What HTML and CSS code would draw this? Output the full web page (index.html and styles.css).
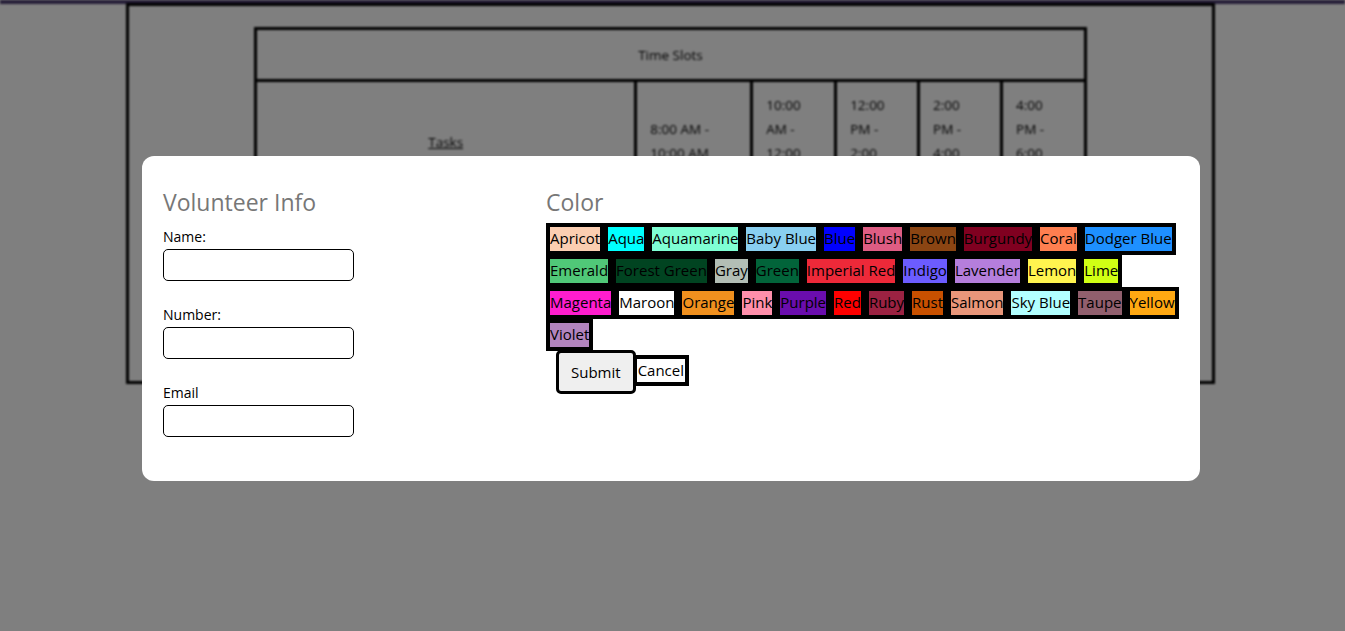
FILE: index.html
```html
<!DOCTYPE html>
<html lang="en">
<head>
<meta charset="utf-8">
<title>Volunteer Sign-up</title>
<link rel="stylesheet" href="styles.css">
</head>
<body>
<div class="page">
  <div class="topbar"></div>
  <div class="frame">
    <table class="slots">
      <tr><th colspan="6" class="head">Time Slots</th></tr>
      <tr>
        <td class="tasks"><span class="tasks-label">Tasks</span></td>
        <td class="time w116">8:00 AM -<br>10:00 AM</td>
        <td class="time w84">10:00<br>AM -<br>12:00<br>PM</td>
        <td class="time w83">12:00<br>PM -<br>2:00<br>PM</td>
        <td class="time w83">2:00<br>PM -<br>4:00<br>PM</td>
        <td class="time w84">4:00<br>PM -<br>6:00<br>PM</td>
      </tr>
    </table>
  </div>
</div>

<div class="overlay">
  <div class="modal">
    <section class="info">
      <h2 class="title">Volunteer Info</h2>
      <div class="field first">
        <label for="name">Name:</label>
        <input id="name" type="text">
      </div>
      <div class="field">
        <label for="number">Number:</label>
        <input id="number" type="text">
      </div>
      <div class="field last">
        <label for="email">Email</label>
        <input id="email" type="text">
      </div>
    </section>
    <section class="colors">
      <h2 class="title">Color</h2>
      <div class="swatches">
        <span class="cell"><span class="chip" style="background:#FBCEB1">Apricot</span></span>
        <span class="cell"><span class="chip" style="background:#00FFFF">Aqua</span></span>
        <span class="cell"><span class="chip" style="background:#7FFFD4">Aquamarine</span></span>
        <span class="cell"><span class="chip" style="background:#89CFF0">Baby Blue</span></span>
        <span class="cell"><span class="chip" style="background:#0000FF">Blue</span></span>
        <span class="cell"><span class="chip" style="background:#DE5D83">Blush</span></span>
        <span class="cell"><span class="chip" style="background:#8B4513">Brown</span></span>
        <span class="cell"><span class="chip" style="background:#800020">Burgundy</span></span>
        <span class="cell"><span class="chip" style="background:#FF7F50">Coral</span></span>
        <span class="cell"><span class="chip" style="background:#1E90FF">Dodger Blue</span></span>
        <span class="cell"><span class="chip" style="background:#50C878">Emerald</span></span>
        <span class="cell"><span class="chip" style="background:#014421">Forest Green</span></span>
        <span class="cell"><span class="chip" style="background:#B2BEB5">Gray</span></span>
        <span class="cell"><span class="chip" style="background:#02643A">Green</span></span>
        <span class="cell"><span class="chip" style="background:#ED2939">Imperial Red</span></span>
        <span class="cell"><span class="chip" style="background:#6C5CFF">Indigo</span></span>
        <span class="cell"><span class="chip" style="background:#B57EDC">Lavender</span></span>
        <span class="cell"><span class="chip" style="background:#FFF44F">Lemon</span></span>
        <span class="cell"><span class="chip" style="background:#D0FF14">Lime</span></span>
        <span class="cell"><span class="chip" style="background:#FF1DCE">Magenta</span></span>
        <span class="cell"><span class="chip" style="background:#FFFFFF">Maroon</span></span>
        <span class="cell"><span class="chip" style="background:#F0901E">Orange</span></span>
        <span class="cell"><span class="chip" style="background:#FF8FAB">Pink</span></span>
        <span class="cell"><span class="chip" style="background:#6A0DAD">Purple</span></span>
        <span class="cell"><span class="chip" style="background:#FF0000">Red</span></span>
        <span class="cell"><span class="chip" style="background:#9B2242">Ruby</span></span>
        <span class="cell"><span class="chip" style="background:#C85000">Rust</span></span>
        <span class="cell"><span class="chip" style="background:#E9967A">Salmon</span></span>
        <span class="cell"><span class="chip" style="background:#B2FFFF">Sky Blue</span></span>
        <span class="cell"><span class="chip" style="background:#915F6D">Taupe</span></span>
        <span class="cell"><span class="chip" style="background:#FFA812">Yellow</span></span>
        <span class="cell"><span class="chip" style="background:#B284BE">Violet</span></span>
      </div>
      <div class="actions">
        <button class="submit" type="button">Submit</button><button class="cancel" type="button">Cancel</button>
      </div>
    </section>
  </div>
</div>
</body>
</html>
```

FILE: styles.css
```css
* { box-sizing: border-box; }

html, body {
  margin: 0;
  padding: 0;
  background: #ffffff;
  font-family: "Open Sans", "Liberation Sans", sans-serif;
  color: #000;
}

/* ---------- background page (blurred) ---------- */
.page {
  filter: blur(1.2px);
  height: 631px;
  overflow: hidden;
}

.topbar {
  height: 4px;
  background: #4a3a6e;
}

.frame {
  margin-left: 126px;
  width: 1089px;
  height: 381px;
  margin-top: -1px;
  border: 3px solid #000;
  padding-top: 21px;
}

.slots {
  border-collapse: collapse;
  margin: 0 auto;
  width: 833px;
  font-size: 13.5px;
  color: #000;
}

.slots th,
.slots td {
  border: 3px solid #000;
}

.slots .head {
  height: 52px;
  font-weight: normal;
  text-align: center;
}

.slots .tasks {
  width: 381px;
  text-align: center;
  vertical-align: middle;
}

.tasks-label {
  text-decoration: underline;
}

.slots .time {
  padding: 11px 10px 12px 13px;
  line-height: 24px;
  vertical-align: middle;
}

.w116 { width: 116px; }
.w84 { width: 84px; }
.w83 { width: 83px; }

/* ---------- overlay + modal ---------- */
.overlay {
  position: fixed;
  inset: 0;
  background: rgba(0, 0, 0, 0.5);
  display: flex;
  align-items: flex-start;
  padding: 156px 0 0 142px;
}

.modal {
  width: 1058px;
  background: #fff;
  border-radius: 12px;
  padding: 32px 21px 44px 21px;
  display: grid;
  grid-template-columns: 383px 1fr;
}

.title {
  margin: 0 0 7px 0;
  font-size: 23px;
  line-height: 28px;
  font-weight: normal;
  color: #777;
}

.field {
  margin-bottom: 25px;
}
.field.first { padding-top: 5px; }
.field.last { margin-bottom: 0; }

.field label {
  display: block;
  font-size: 14px;
  line-height: 18px;
  margin-bottom: 3px;
  color: #000;
}

.field input {
  display: block;
  width: 191px;
  height: 32px;
  border: 1px solid #000;
  border-radius: 5px;
  background: #fff;
  font-family: inherit;
  font-size: 14px;
  padding: 0 6px;
}

/* ---------- color swatches ---------- */
.swatches {
  display: flex;
  flex-wrap: wrap;
  margin-bottom: -1px;
}

.cell {
  background: #000;
  padding: 4px;
}

.chip {
  display: block;
  height: 24px;
  line-height: 23px;
  font-size: 15px;
  color: #000;
  white-space: nowrap;
}

.actions {
  display: flex;
  align-items: flex-start;
  padding-left: 10px;
}

.submit {
  font-family: inherit;
  font-size: 15px;
  line-height: 20px;
  padding: 9px 12px;
  border: 3px solid #000;
  border-radius: 5px;
  background: #efefef;
  color: #000;
}

.cancel {
  font-family: inherit;
  font-size: 15px;
  line-height: 23px;
  padding: 0 1px;
  margin: 5px 0 0 -3px;
  border: 4px solid #000;
  border-radius: 0;
  background: #fff;
  color: #000;
}
```
